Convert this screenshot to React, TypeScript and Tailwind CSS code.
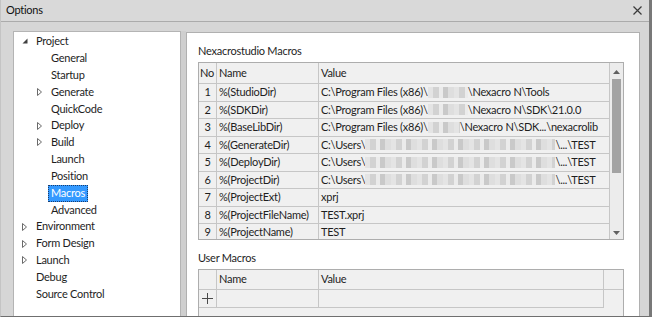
import type { ReactNode } from 'react'

type TreeItem = {
  label: string
  level: 0 | 1
  arrow?: 'open' | 'closed'
  selected?: boolean
}

const tree: TreeItem[] = [
  { label: 'Project', level: 0, arrow: 'open' },
  { label: 'General', level: 1 },
  { label: 'Startup', level: 1 },
  { label: 'Generate', level: 1, arrow: 'closed' },
  { label: 'QuickCode', level: 1 },
  { label: 'Deploy', level: 1, arrow: 'closed' },
  { label: 'Build', level: 1, arrow: 'closed' },
  { label: 'Launch', level: 1 },
  { label: 'Position', level: 1 },
  { label: 'Macros', level: 1, selected: true },
  { label: 'Advanced', level: 1 },
  { label: 'Environment', level: 0, arrow: 'closed' },
  { label: 'Form Design', level: 0, arrow: 'closed' },
  { label: 'Launch', level: 0, arrow: 'closed' },
  { label: 'Debug', level: 0 },
  { label: 'Source Control', level: 0 },
]

// pixelated smear standing in for the hidden user name
function Blur({ w }: { w: number }) {
  return (
    <span
      className="inline-block h-[11px] align-middle bg-[repeating-linear-gradient(90deg,#e4e4e4_0_5px,#d2d2d2_5px_11px,#ebebeb_11px_15px,#c9c9c9_15px_20px,#dedede_20px_26px)]"
      style={{ width: w }}
    />
  )
}

const macros: { name: string; value: ReactNode }[] = [
  {
    name: '%(StudioDir)',
    value: (
      <>
        C:\Program Files (x86)\<Blur w={40} />\Nexacro N\Tools
      </>
    ),
  },
  {
    name: '%(SDKDir)',
    value: (
      <>
        C:\Program Files (x86)\<Blur w={40} />\Nexacro N\SDK\21.0.0
      </>
    ),
  },
  {
    name: '%(BaseLibDir)',
    value: (
      <>
        C:\Program Files (x86)\<Blur w={32} />\Nexacro N\SDK...\nexacrolib
      </>
    ),
  },
  {
    name: '%(GenerateDir)',
    value: (
      <>
        C:\Users\<Blur w={190} />\...\TEST
      </>
    ),
  },
  {
    name: '%(DeployDir)',
    value: (
      <>
        C:\Users\<Blur w={190} />\...\TEST
      </>
    ),
  },
  {
    name: '%(ProjectDir)',
    value: (
      <>
        C:\Users\<Blur w={190} />\...\TEST
      </>
    ),
  },
  { name: '%(ProjectExt)', value: 'xprj' },
  { name: '%(ProjectFileName)', value: 'TEST.xprj' },
  { name: '%(ProjectName)', value: 'TEST' },
]

function Arrow({ kind }: { kind: 'open' | 'closed' }) {
  if (kind === 'open') {
    return (
      <svg width="6" height="6" viewBox="0 0 6 6">
        <path d="M5.5 0.5 L5.5 5.5 L0.5 5.5 Z" fill="#404040" />
      </svg>
    )
  }
  return (
    <svg width="5" height="8" viewBox="0 0 5 8">
      <path d="M0.5 0.5 L4.5 4 L0.5 7.5 Z" fill="none" stroke="#6a6a6a" strokeWidth="1" />
    </svg>
  )
}

function TreeRow({ item }: { item: TreeItem }) {
  const indent = item.level === 0 ? 'pl-[8px]' : 'pl-[23px]'
  return (
    <div className={`flex h-[16.85px] items-center whitespace-nowrap ${indent}`}>
      <span className="flex w-[14px] shrink-0 items-center">
        {item.arrow && <Arrow kind={item.arrow} />}
      </span>
      {item.selected ? (
        <span className="ml-[-3px] flex h-[17px] items-center border border-dotted border-[#1a3d6e] bg-[#3399ff] px-[2px] text-white">
          {item.label}
        </span>
      ) : (
        <span className="text-[#1e1e1e]">{item.label}</span>
      )}
    </div>
  )
}

function Scrollbar() {
  return (
    <div className="flex w-[14px] shrink-0 flex-col items-center border-l border-[#c6c6c6] bg-[#ececec]">
      <svg width="7" height="4" viewBox="0 0 7 4" className="mt-[7px]">
        <path d="M0 4 L3.5 0 L7 4 Z" fill="#606060" />
      </svg>
      <div className="mt-[5px] h-[94px] w-[9px] bg-[#a3a3a3]" />
      <div className="flex-1" />
      <svg width="7" height="4" viewBox="0 0 7 4" className="mb-[4px]">
        <path d="M0 0 L3.5 4 L7 0 Z" fill="#606060" />
      </svg>
    </div>
  )
}

function MacroTable() {
  return (
    <div className="flex h-[178px] w-[426px] overflow-hidden border border-[#adadad] bg-[#f0f0f0]">
      <div className="flex w-[410px] flex-col">
        <div className="grid h-[21px] shrink-0 grid-cols-[18px_102px_1fr] border-b border-[#c6c6c6]">
          <div className="flex items-center border-r border-[#c6c6c6] pl-[1px]">No</div>
          <div className="flex items-center border-r border-[#c6c6c6] pl-[2px]">Name</div>
          <div className="flex items-center pl-[2px]">Value</div>
        </div>
        {macros.map((m, i) => (
          <div
            key={m.name}
            className="grid h-[17.5px] shrink-0 grid-cols-[18px_102px_1fr] border-b border-[#c6c6c6] whitespace-nowrap"
          >
            <div className="flex items-center justify-center border-r border-[#c6c6c6]">{i + 1}</div>
            <div className="flex items-center overflow-hidden border-r border-[#c6c6c6] pl-[2px]">{m.name}</div>
            <div className="flex items-center overflow-hidden pl-[2px]">{m.value}</div>
          </div>
        ))}
      </div>
      <Scrollbar />
    </div>
  )
}

function UserMacroTable() {
  return (
    <div className="h-[60px] w-[426px] border border-[#adadad] bg-[#f0f0f0]">
      <div className="grid h-[20px] grid-cols-[18px_102px_285px_1fr] border-b border-[#c6c6c6]">
        <div className="border-r border-[#c6c6c6]" />
        <div className="flex items-center border-r border-[#c6c6c6] pl-[2px]">Name</div>
        <div className="flex items-center border-r border-[#c6c6c6] pl-[2px]">Value</div>
        <div />
      </div>
      <div className="grid h-[18px] w-[405px] grid-cols-[18px_102px_1fr] border-r border-b border-[#c6c6c6]">
        <div className="flex items-center justify-center border-r border-[#c6c6c6]">
          <svg width="11" height="11" viewBox="0 0 11 11">
            <path d="M5.5 0 V11 M0 5.5 H11" stroke="#4a4a4a" strokeWidth="1" />
          </svg>
        </div>
        <div className="border-r border-[#c6c6c6]" />
        <div />
      </div>
    </div>
  )
}

export default function App() {
  return (
    <div className="flex h-[317px] w-[652px] flex-col overflow-hidden border-l border-b border-r-[3px] border-l-[#c4c4c4] border-b-[#6f6f6f] border-r-[#787878] bg-[#d6d6d6] font-['Lato',sans-serif] text-[11px] tracking-[-0.25px] text-[#1e1e1e]">
      <div className="flex h-[22px] shrink-0 items-center justify-between border-b border-[#ababab] bg-[#d9d9d9] pl-[5px] pr-[7px]">
        <span className="text-[#111]">Options</span>
        <svg width="9" height="9" viewBox="0 0 9 9">
          <path d="M0.5 0.5 L8.5 8.5 M8.5 0.5 L0.5 8.5" stroke="#3a3a3a" strokeWidth="1.2" />
        </svg>
      </div>

      <div className="flex flex-1 pl-[12px] pt-[9px]">
        <div className="w-[168px] shrink-0 border border-b-0 border-[#b4b4b4] bg-white pt-[1px]">
          {tree.map((item, i) => (
            <TreeRow key={i} item={item} />
          ))}
        </div>

        <div className="w-[5px] shrink-0 bg-[#cfcfcf]" />

        <div className="mt-[1px] w-[454px] shrink-0 border border-b-0 border-[#b0b0b0] bg-white pl-[11px]">
          <div className="flex h-[29px] items-end pb-[3px]">Nexacrostudio Macros</div>
          <MacroTable />
          <div className="flex h-[29px] items-end pb-[3px]">User Macros</div>
          <UserMacroTable />
        </div>
      </div>
    </div>
  )
}
